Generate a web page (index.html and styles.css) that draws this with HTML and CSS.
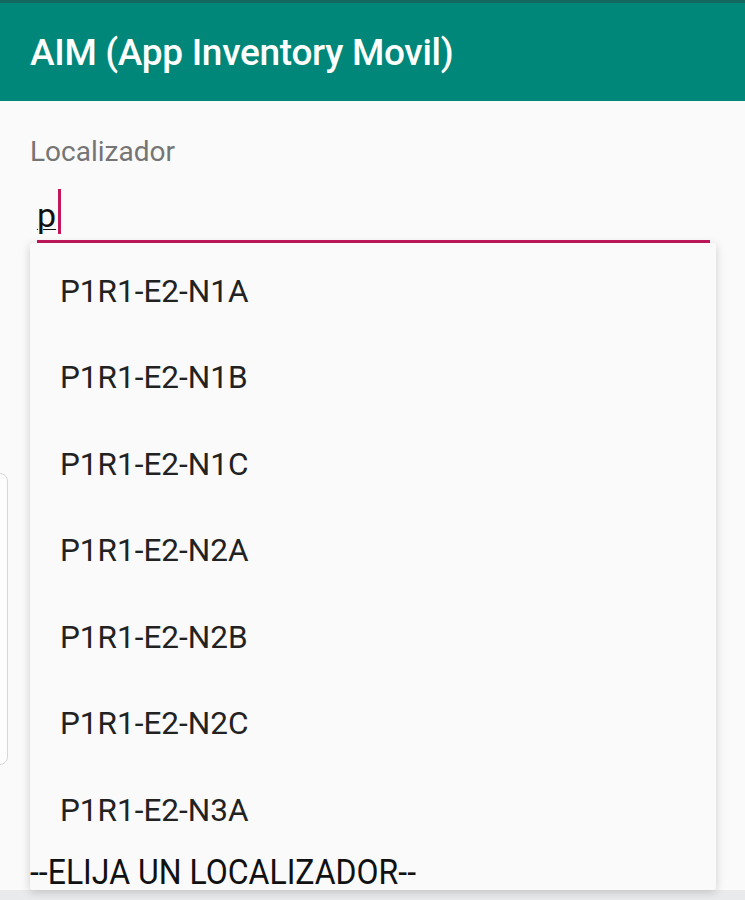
FILE: index.html
```html
<!DOCTYPE html>
<html lang="es">
    <head>
        <meta charset="UTF-8" />
        <meta name="viewport" content="width=device-width, initial-scale=1.0" />
        <title>AIM (App Inventory Movil)</title>
        <link rel="stylesheet" href="styles.css">
    </head>
    <body>
        <header class="app-bar">
            <h1>AIM (App Inventory Movil)</h1>
        </header>

        <main class="content">
            <label class="field-label" for="localizador">Localizador</label>
            <div class="field">
                <span class="field-value">p</span><span class="caret"></span>
            </div>

            <div class="side-card"></div>

            <ul class="dropdown">
                <li>P1R1-E2-N1A</li>
                <li>P1R1-E2-N1B</li>
                <li>P1R1-E2-N1C</li>
                <li>P1R1-E2-N2A</li>
                <li>P1R1-E2-N2B</li>
                <li>P1R1-E2-N2C</li>
                <li>P1R1-E2-N3A</li>
            </ul>

            <div class="spinner-text">--ELIJA UN LOCALIZADOR--</div>
        </main>

        <div class="nav-strip"></div>
    </body>
</html>
```

FILE: styles.css
```css
* {
    box-sizing: border-box;
}

html,
body {
    height: 100%;
}

body {
    margin: 0;
    overflow: hidden;
    display: flex;
    flex-direction: column;
    background-color: #fafafa;
    font-family: Roboto, "Noto Sans", sans-serif;
}

.app-bar {
    display: flex;
    align-items: center;
    height: 101px;
    padding: 0 30px;
    border-top: 3px solid #12675f;
    background-color: #00877a;
}

.app-bar h1 {
    margin: 0;
    color: #fff;
    font-size: 37px;
    font-weight: 500;
    letter-spacing: -0.3px;
}

.content {
    position: relative;
    flex: 1;
    padding: 34px 35px 0 30px;
}

.field-label {
    display: block;
    color: #757575;
    font-size: 28px;
    line-height: 34px;
}

.field {
    display: flex;
    align-items: flex-end;
    height: 74px;
    margin-left: 7px;
    padding-bottom: 6px;
    border-bottom: 3px solid #c2185b;
}

.field-value {
    color: #111;
    font-size: 34px;
    line-height: 38px;
    text-decoration: underline;
    text-decoration-thickness: 1px;
    text-underline-offset: 2px;
}

.caret {
    width: 3px;
    height: 45px;
    margin-left: 2px;
    background-color: #c2185b;
}

.side-card {
    position: absolute;
    top: 372px;
    left: -10px;
    width: 18px;
    height: 292px;
    border: 1px solid #d8d8d8;
    border-radius: 8px;
    background-color: #fdfdfd;
}

.dropdown {
    position: absolute;
    top: 142px;
    left: 30px;
    width: 686px;
    height: 647px;
    margin: 0;
    padding: 5px 0 0;
    list-style: none;
    border-radius: 3px;
    background-color: #fafafa;
    box-shadow: 0 2px 10px rgba(0, 0, 0, 0.18);
}

.dropdown li {
    display: flex;
    align-items: center;
    height: 86.5px;
    padding-left: 30px;
    color: #222;
    font-size: 31.5px;
}

.spinner-text {
    position: absolute;
    top: 753px;
    left: 30px;
    color: #111;
    font-size: 32px;
    line-height: 36px;
    transform: scaleY(1.12);
    transform-origin: left center;
}

.nav-strip {
    height: 10px;
    background-color: #e8eaeb;
}
```
